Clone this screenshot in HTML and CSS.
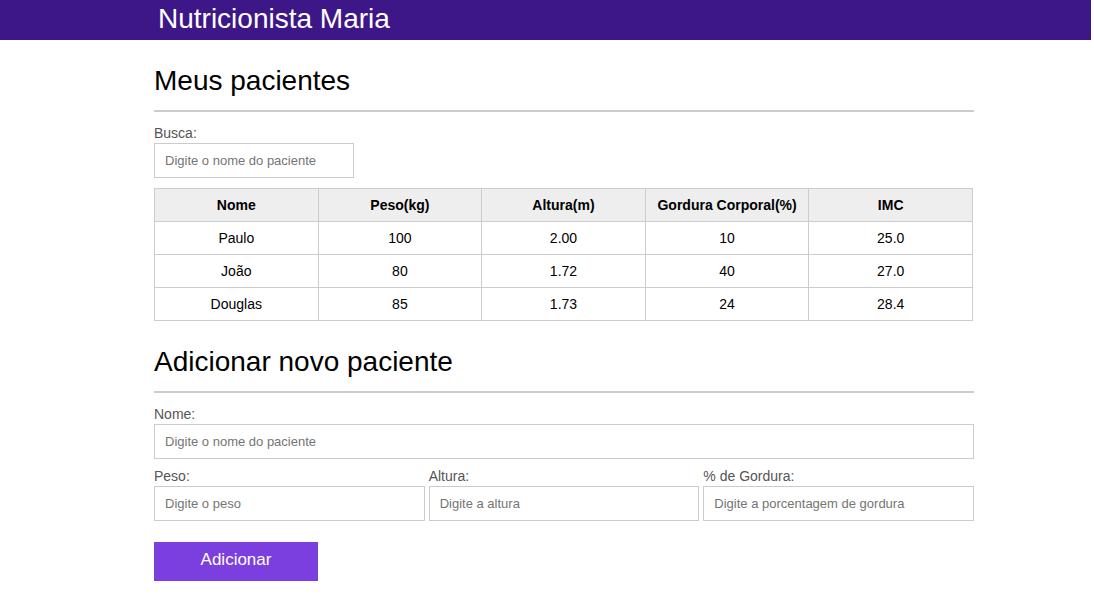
FILE: index.html
```html
<!DOCTYPE html>
<html lang="pt-BR">
<head>
<meta charset="utf-8">
<title>Nutricionista Maria</title>
<link rel="stylesheet" href="styles.css">
</head>
<body>
<header class="topbar">
  <h1 class="brand">Nutricionista Maria</h1>
</header>
<main class="container">
  <section class="section">
    <h2 class="section-title">Meus pacientes</h2>
    <hr class="divider">
    <label class="field-label" for="busca">Busca:</label>
    <input class="field field-search" id="busca" type="text" placeholder="Digite o nome do paciente">
    <table class="patients">
      <thead>
        <tr><th>Nome</th><th>Peso(kg)</th><th>Altura(m)</th><th>Gordura Corporal(%)</th><th>IMC</th></tr>
      </thead>
      <tbody>
        <tr><td>Paulo</td><td>100</td><td>2.00</td><td>10</td><td>25.0</td></tr>
        <tr><td>João</td><td>80</td><td>1.72</td><td>40</td><td>27.0</td></tr>
        <tr><td>Douglas</td><td>85</td><td>1.73</td><td>24</td><td>28.4</td></tr>
      </tbody>
    </table>
  </section>
  <section class="section">
    <h2 class="section-title">Adicionar novo paciente</h2>
    <hr class="divider">
    <form class="form">
      <div class="group">
        <label class="field-label" for="nome">Nome:</label>
        <input class="field" id="nome" type="text" placeholder="Digite o nome do paciente">
      </div>
      <div class="row">
        <div class="group col">
          <label class="field-label" for="peso">Peso:</label>
          <input class="field" id="peso" type="text" placeholder="Digite o peso">
        </div>
        <div class="group col">
          <label class="field-label" for="altura">Altura:</label>
          <input class="field" id="altura" type="text" placeholder="Digite a altura">
        </div>
        <div class="group col">
          <label class="field-label" for="gordura">% de Gordura:</label>
          <input class="field" id="gordura" type="text" placeholder="Digite a porcentagem de gordura">
        </div>
      </div>
      <button class="btn" type="button">Adicionar</button>
    </form>
  </section>
</main>
</body>
</html>
```

FILE: styles.css
```css
* { box-sizing: border-box; }

body {
  margin: 0;
  font-family: "Liberation Sans", Arial, sans-serif;
  color: #000;
  background: #fff;
}

.topbar {
  background: #3d1788;
  height: 40px;
  margin-right: 3px;
}

.brand {
  margin: 0 0 0 158px;
  font-size: 28px;
  font-weight: normal;
  line-height: 37px;
  color: #fff;
}

.container {
  width: 820px;
  margin-left: 154px;
}

.section-title {
  margin: 25px 0 0;
  font-size: 28px;
  font-weight: normal;
  line-height: 32px;
}

.divider {
  border: 0;
  height: 2px;
  background: #ccc;
  margin: 13px 0 13px;
}

.field-label {
  display: block;
  font-size: 14px;
  line-height: 16px;
  color: #555;
  margin-bottom: 2px;
}

.field {
  display: block;
  width: 100%;
  height: 35px;
  border: 1px solid #ccc;
  padding: 0 10px;
  font-family: "Liberation Sans", Arial, sans-serif;
  font-size: 13px;
  color: #333;
  background: #fff;
  outline: none;
}

.field::placeholder { color: #757575; }

.field-search { width: 200px; }

.patients {
  width: 819px;
  margin-top: 10px;
  border-collapse: collapse;
  font-size: 14px;
  table-layout: fixed;
}

.patients th,
.patients td {
  border: 1px solid #ccc;
  padding: 8px 0;
  line-height: 16px;
  text-align: center;
}

.patients th {
  background: #eee;
  font-weight: bold;
}

.form { display: block; }

.group { margin-bottom: 9px; }

.row {
  display: flex;
  gap: 4px;
}

.col { flex: 1 1 0; min-width: 0; }

.btn {
  display: block;
  margin-top: 12px;
  width: 164px;
  height: 39px;
  border: 0;
  padding: 0 0 4px;
  background: #7b3fdf;
  color: #fff;
  font-family: "Liberation Sans", Arial, sans-serif;
  font-size: 17px;
  cursor: pointer;
}
```
